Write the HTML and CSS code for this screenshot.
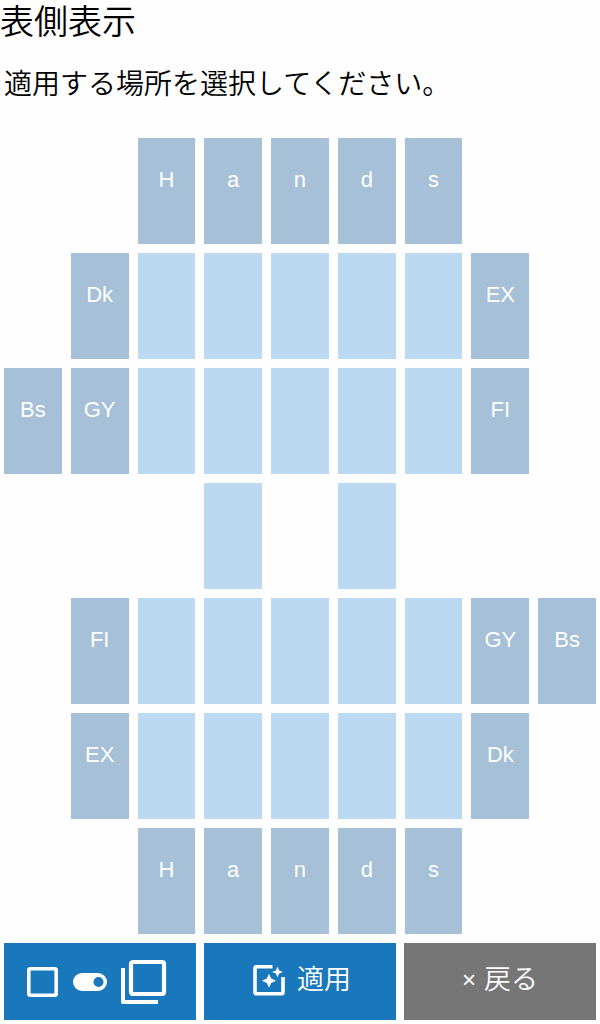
FILE: index.html
```html
<!DOCTYPE html>
<html lang="ja">
<head>
<meta charset="utf-8">
<meta name="viewport" content="width=device-width, initial-scale=1">
<title>表側表示</title>
<link rel="stylesheet" href="styles.css">
</head>
<body>
<main class="dialog">
  <h1 class="title">表側表示</h1>
  <p class="message">適用する場所を選択してください。</p>

  <div class="board">
    <button class="cell pile col-3">H</button>
    <button class="cell pile">a</button>
    <button class="cell pile">n</button>
    <button class="cell pile">d</button>
    <button class="cell pile">s</button>

    <button class="cell pile col-2">Dk</button>
    <button class="cell"></button>
    <button class="cell"></button>
    <button class="cell"></button>
    <button class="cell"></button>
    <button class="cell"></button>
    <button class="cell pile">EX</button>

    <button class="cell pile col-1">Bs</button>
    <button class="cell pile">GY</button>
    <button class="cell"></button>
    <button class="cell"></button>
    <button class="cell"></button>
    <button class="cell"></button>
    <button class="cell"></button>
    <button class="cell pile">FI</button>

    <button class="cell col-4"></button>
    <button class="cell col-6"></button>

    <button class="cell pile col-2">FI</button>
    <button class="cell"></button>
    <button class="cell"></button>
    <button class="cell"></button>
    <button class="cell"></button>
    <button class="cell"></button>
    <button class="cell pile">GY</button>
    <button class="cell pile">Bs</button>

    <button class="cell pile col-2">EX</button>
    <button class="cell"></button>
    <button class="cell"></button>
    <button class="cell"></button>
    <button class="cell"></button>
    <button class="cell"></button>
    <button class="cell pile">Dk</button>

    <button class="cell pile col-3">H</button>
    <button class="cell pile">a</button>
    <button class="cell pile">n</button>
    <button class="cell pile">d</button>
    <button class="cell pile">s</button>
  </div>

  <div class="actions">
    <button class="action mode" aria-label="単一・複数の切り替え">
      <svg class="icon-single" viewBox="0 0 32 32" aria-hidden="true"><rect x="1.800" y="2.800" width="27.400" height="26.400" rx="1.500" fill="none" stroke="currentColor" stroke-width="3.600"/></svg>
      <svg class="icon-toggle" viewBox="0 0 34 18" aria-hidden="true"><path fill="currentColor" fill-rule="evenodd" d="M9 0h16a9 9 0 0 1 0 18H9A9 9 0 0 1 9 0zm16.500 4a5 5 0 1 0 0 10a5 5 0 0 0 0-10z"/></svg>
      <svg class="icon-multi" viewBox="0 0 46 46" aria-hidden="true"><rect x="10" y="3" width="33" height="32" rx="2" fill="none" stroke="currentColor" stroke-width="4.200"/><path d="M2 9v34h35" fill="none" stroke="currentColor" stroke-width="4" stroke-linejoin="round"/></svg>
    </button>
    <button class="action apply">
      <svg class="icon-apply" viewBox="0 0 32 32" aria-hidden="true"><path d="M19.500 2.700H3.500q-1.500 0-1.500 1.500v24q0 1.500 1.500 1.500h25q1.500 0 1.500-1.500V13" fill="none" stroke="currentColor" stroke-width="3.600"/><path fill="currentColor" d="M16 9.800l2.200 4.800 4.800 2.200-4.800 2.200-2.200 4.800-2.200-4.800-4.800-2.200 4.800-2.200zM24.500 2.500l1.600 3.900 3.900 1.600-3.900 1.600-1.600 3.900-1.600-3.900-3.900-1.600 3.900-1.600z"/></svg>
      <span>適用</span>
    </button>
    <button class="action back"><span class="times">×</span><span>戻る</span></button>
  </div>
</main>
</body>
</html>
```
FILE: styles.css
```css
* {
  box-sizing: border-box;
}

body {
  margin: 0;
  background: #fefefe;
  color: #000;
  font-family: "Liberation Sans", "Noto Sans CJK JP", sans-serif;
  font-weight: 350;
}

button {
  border: 0;
  font-family: inherit;
  font-weight: inherit;
  color: #fff;
  cursor: pointer;
}

.title {
  margin: 0;
  font-size: 34px;
  line-height: 44px;
  font-weight: 350;
}

.message {
  margin: 21px 4px 33px;
  font-size: 28px;
  line-height: 40px;
}

.board {
  display: grid;
  grid-template-columns: repeat(9, minmax(0, 1fr));
  grid-auto-rows: 106px;
  gap: 9px;
  padding: 0 4px;
}

.cell {
  padding: 0 0 22px;
  background: #bbdaf1;
  font-size: 22px;
  line-height: 26px;
}

.pile {
  background: #a5c0d7;
}

.col-1 { grid-column-start: 1; }
.col-2 { grid-column-start: 2; }
.col-3 { grid-column-start: 3; }
.col-4 { grid-column-start: 4; }
.col-6 { grid-column-start: 6; }

.actions {
  display: grid;
  grid-template-columns: repeat(3, minmax(0, 1fr));
  gap: 8px;
  padding: 9px 4px 4px;
}

.action {
  display: flex;
  align-items: center;
  justify-content: center;
  height: 77px;
  padding: 0 0 3px;
  background: #1878bb;
  font-size: 27px;
  line-height: 40px;
}

.mode {
  gap: 14px;
  padding: 0 6px 0 0;
}

.apply {
  gap: 12px;
  padding: 0 0 3px 4px;
}

.back {
  gap: 8px;
  background: #767676;
}

.times {
  font-size: 24px;
}

.icon-single,
.icon-apply {
  width: 32px;
  height: 32px;
}

.icon-toggle {
  width: 34px;
  height: 18px;
}

.icon-multi {
  width: 46px;
  height: 46px;
}
```
